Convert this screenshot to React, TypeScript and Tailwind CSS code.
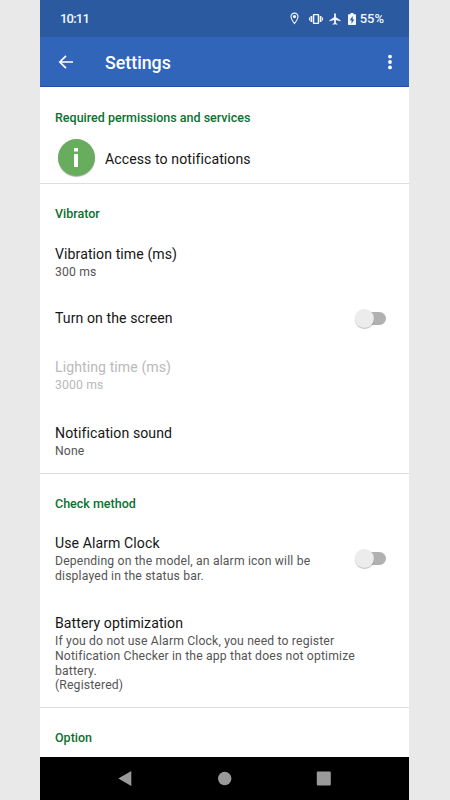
import type { ReactNode } from 'react';
import { clsx } from 'clsx';

interface PreferenceProps {
  readonly title: string;
  readonly summary?: string;
  readonly disabled?: boolean;
  readonly children?: ReactNode;
}

interface SectionProps {
  readonly title: string;
  readonly first?: boolean;
  readonly children?: ReactNode;
}

const titleClass = 'text-[14.100px] leading-[20px] tracking-[0.080px]';

function StatusBar() {
  return (
    <div className="flex h-[37px] shrink-0 items-center justify-between bg-[#2c5aa0] pl-[20px] pr-[25px] text-[#f4f7fc]">
      <span className="text-[13px] font-medium leading-none tracking-[-0.8px]">10:11</span>
      <div className="flex items-center">
        <svg viewBox="0 0 24 24" className="h-[13px] w-[13px]" fill="currentColor" aria-hidden="true">
          <path d="M12 1C7.6 1 4.5 4.4 4.5 8.5 4.500 14.200 12 23 12 23s7.500-8.800 7.500-14.500C19.500 4.400 16.400 1 12 1zm0 18.600C9.800 16.800 6.600 12 6.600 8.600a5.400 5.400 0 0 1 10.800 0c0 3.400-3.200 8.200-5.400 11z" />
          <circle cx="12" cy="8.500" r="3" />
        </svg>
        <svg viewBox="0 0 14 12" className="ml-[8px] h-[12px] w-[14px]" fill="currentColor" fillRule="evenodd" aria-hidden="true">
          <path d="M0 4.500h1v3H0zM1.500 3h1.700v6H1.500zM10.800 3h1.700v6h-1.700zM13 4.500h1v3h-1zM4.700 1h4.600c.5 0 .9.400.9.900v8.200c0 .5-.4.900-.9.900H4.700c-.5 0-.9-.4-.9-.9V1.900c0-.5.400-.9.900-.9zM5.300 2.300v7.400h3.400V2.300z" />
        </svg>
        <svg viewBox="0 0 24 24" className="ml-[5px] h-[14px] w-[14px]" fill="currentColor" aria-hidden="true">
          <path d="M21.500 16v-2l-8-5V3.500c0-.83-.67-1.500-1.500-1.500s-1.500.67-1.500 1.500V9l-8 5v2l8-2.500V19l-2.500 1.500V22l4-1 4 1v-1.500L13.500 19v-5.500l8 2.500z" />
        </svg>
        <svg viewBox="0 0 8 12" className="ml-[6px] h-[12px] w-[8px]" fill="currentColor" fillRule="evenodd" aria-hidden="true">
          <path d="M2.500 0h3v1.200h1.700c.4 0 .8.400.8.800v9.200c0 .4-.4.800-.8.800H.8c-.4 0-.8-.4-.8-.8V2c0-.4.400-.8.800-.8h1.700zM4.700 3 1.800 7.300h1.700V10.800L6.300 6.500H4.700z" />
        </svg>
        <span className="ml-[4px] text-[13px] font-medium leading-none">55%</span>
      </div>
    </div>
  );
}

function AppBar() {
  return (
    <header className="flex h-[50px] shrink-0 items-center border-b border-[#1c50ae] bg-[#3065b9] pl-[18px] pr-[16px] text-white">
      <svg viewBox="0 0 16 14" className="h-[14px] w-[16px]" fill="none" stroke="currentColor" strokeWidth="1.700" aria-hidden="true">
        <path d="M15 7H2M8 .9 1.800 7 8 13.100" />
      </svg>
      <h1 className="ml-[31px] mt-[2px] grow text-[17.800px] font-medium leading-6">Settings</h1>
      <svg viewBox="0 0 6 16" className="h-[16px] w-[6px]" fill="currentColor" aria-hidden="true">
        <circle cx="3" cy="2.600" r="1.900" />
        <circle cx="3" cy="8" r="1.900" />
        <circle cx="3" cy="13.400" r="1.900" />
      </svg>
    </header>
  );
}

function Section({ title, first, children }: SectionProps) {
  return (
    <section className="border-b border-[#dedede] last:border-b-0">
      <h2
        className={clsx(
          'pl-[15px] text-[12.500px] font-medium leading-[20px] text-[#0d7030]',
          first ? 'h-[45px] pt-[21px]' : 'h-[44px] pt-[20px]',
        )}
      >
        {title}
      </h2>
      {children}
    </section>
  );
}

function Preference({ title, summary, disabled, children }: PreferenceProps) {
  return (
    <div
      className={clsx(
        'flex items-center justify-between pl-[15px] pr-[23.500px]',
        summary ? 'pb-[14.300px] pt-[15.650px]' : 'h-[48px] pt-px',
      )}
    >
      <div>
        <div className={clsx(titleClass, disabled ? 'text-[#b9b9b9]' : 'text-[#161616]')}>{title}</div>
        {summary ? (
          <div
            className={clsx(
              'mt-px whitespace-pre-line text-[12.200px] leading-[14.600px] tracking-[0.160px]',
              disabled ? 'text-[#b9b9b9]' : 'text-[#555]',
            )}
          >
            {summary}
          </div>
        ) : null}
      </div>
      {children}
    </div>
  );
}

function Switch() {
  return (
    <button type="button" role="switch" aria-checked="false" className="flex h-[20px] w-[30px] shrink-0 items-center">
      <span className="flex h-[13px] w-[30px] items-center rounded-full bg-[#b1b1b1]">
        <span className="-ml-px h-[19px] w-[19px] shrink-0 rounded-full bg-[#ececec] shadow-[0_1px_1px_rgba(0,0,0,0.25)]" />
      </span>
    </button>
  );
}

function NavigationBar() {
  return (
    <nav className="flex h-[43px] shrink-0 bg-black text-[#9a9a9a]">
      <svg viewBox="0 0 369 43" className="h-[43px] w-[369px]" fill="currentColor" aria-hidden="true">
        <path d="M91.300 14v15L78.300 21.500z" />
        <circle cx="184.700" cy="21.500" r="6.700" />
        <rect x="276.800" y="14.500" width="14" height="14" rx="1" />
      </svg>
    </nav>
  );
}

export default function App() {
  return (
    <div className="flex h-[800px] w-[450px] overflow-hidden bg-[#e9e9e9] pl-[40px] font-['Roboto',sans-serif]">
      <div className="flex w-[369px] flex-col bg-white">
        <StatusBar />
        <AppBar />
        <main className="flex-1 overflow-hidden">
          <Section title="Required permissions and services" first>
            <div className="flex h-[51px] items-start pl-[17.500px] pt-[7px]">
              <span className="flex h-[37px] w-[37px] items-center justify-center rounded-full bg-[#68ad5e] shadow-[0_1px_1px_rgba(0,0,0,0.3)]">
                <svg viewBox="0 0 4 19" className="h-[19px] w-[4px]" fill="white" aria-hidden="true">
                  <path d="M0 0h4v3.500H0zM0 6h4v13H0z" />
                </svg>
              </span>
              <span className={clsx(titleClass, 'ml-[10.500px] mt-[10px] text-[#161616]')}>Access to notifications</span>
            </div>
          </Section>
          <Section title="Vibrator">
            <Preference title="Vibration time (ms)" summary="300 ms" />
            <Preference title="Turn on the screen">
              <Switch />
            </Preference>
            <Preference title="Lighting time (ms)" summary="3000 ms" disabled />
            <Preference title="Notification sound" summary="None" />
          </Section>
          <Section title="Check method">
            <Preference
              title="Use Alarm Clock"
              summary={'Depending on the model, an alarm icon will be\ndisplayed in the status bar.'}
            >
              <Switch />
            </Preference>
            <Preference
              title="Battery optimization"
              summary={
                'If you do not use Alarm Clock, you need to register\nNotification Checker in the app that does not optimize\nbattery.\n(Registered)'
              }
            />
          </Section>
          <Section title="Option" />
        </main>
        <NavigationBar />
      </div>
    </div>
  );
}
